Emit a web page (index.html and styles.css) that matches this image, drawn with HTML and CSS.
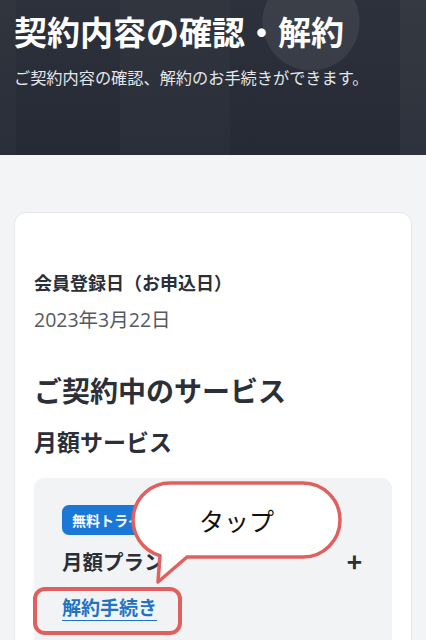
FILE: index.html
```html
<!DOCTYPE html>
<html lang="ja">

<head>
    <meta charset="UTF-8">
    <meta name="viewport" content="width=device-width, initial-scale=1.0">
    <title>契約内容の確認・解約</title>
    <link rel="stylesheet" href="styles.css">
</head>

<body>
    <header class="hero">
        <h1 class="hero-title">契約内容の確認・解約</h1>
        <p class="hero-lead">ご契約内容の確認、解約のお手続きができます。</p>
    </header>

    <main class="content">
        <section class="card">
            <div class="label">会員登録日（お申込日）</div>
            <div class="value">2023年3月22日</div>

            <h2 class="section-title">ご契約中のサービス</h2>
            <h3 class="sub-title">月額サービス</h3>

            <div class="plan">
                <span class="badge">無料トライアル中</span>
                <div class="plan-row">
                    <span class="plan-name">月額プラン</span>
                    <span class="plan-toggle">+</span>
                </div>
                <a class="cancel-link" href="#">解約手続き</a>

                <!-- annotation overlays -->
                <span class="mark"></span>
                <div class="callout">
                    <svg width="215" height="105" viewBox="0 0 215 105">
                        <path d="M40,3 H173 A37,37 0 0 1 173,77 H57 L28,102 L30,75.6 A37,37 0 0 1 40,3 Z"
                            fill="#fff" stroke="#e0605f" stroke-width="3.5" stroke-linejoin="round" />
                    </svg>
                    <span class="callout-text">タップ</span>
                </div>
            </div>
        </section>
    </main>
</body>

</html>
```

FILE: styles.css
```css
body {
    margin: 0;
    background-color: #f3f4f6;
    font-family: "Noto Sans CJK JP", "Noto Sans", sans-serif;
    color: #2b2f37;
}

.hero {
    height: 155px;
    box-sizing: border-box;
    padding: 10px 14px 0;
    background:
        radial-gradient(circle at 311px 22px, rgba(255, 255, 255, 0.07) 48px, transparent 49px),
        linear-gradient(90deg, rgba(255, 255, 255, 0.02) 0 16px, transparent 16px 120px, rgba(255, 255, 255, 0.02) 120px 230px, transparent 230px 400px, rgba(255, 255, 255, 0.04) 400px),
        linear-gradient(180deg, #2c313b 0%, #252a34 100%);
    color: #fff;
}

.hero-title {
    margin: 0;
    font-size: 33px;
    line-height: 42px;
    font-weight: 700;
}

.hero-lead {
    margin: 13px 0 0;
    font-size: 16.2px;
    line-height: 24px;
    color: #e4e6ea;
}

.content {
    padding: 57px 14px 0;
}

.card {
    background-color: #fff;
    border: 1px solid #e6e8eb;
    border-radius: 12px;
    padding: 57px 19px 40px;
}

.label {
    font-size: 18px;
    line-height: 24px;
    font-weight: 700;
}

.value {
    margin-top: 14px;
    font-family: "Open Sans", "Noto Sans CJK JP", sans-serif;
    font-size: 19.5px;
    line-height: 24px;
    color: #555a61;
}

.section-title {
    margin: 40px 0 0;
    font-size: 28px;
    line-height: 36px;
    font-weight: 700;
}

.sub-title {
    margin: 18px 0 0;
    font-size: 23px;
    line-height: 30px;
    font-weight: 700;
}

.plan {
    position: relative;
    margin-top: 22px;
    background-color: #f2f3f5;
    border-radius: 10px;
    padding: 27px 28px 30px;
}

.badge {
    display: inline-block;
    height: 30px;
    line-height: 30px;
    padding: 0 10px;
    border-radius: 7px;
    background-color: #1a78d6;
    color: #fff;
    font-size: 14px;
    font-weight: 700;
}

.plan-row {
    display: flex;
    justify-content: space-between;
    align-items: center;
    margin-top: 12px;
}

.plan-name {
    font-size: 20.5px;
    line-height: 28px;
    font-weight: 700;
}

.plan-toggle {
    font-size: 26px;
    line-height: 28px;
    font-weight: 700;
    margin-right: 2px;
}

.cancel-link {
    display: inline-block;
    margin-top: 19px;
    font-size: 19px;
    line-height: 26px;
    font-weight: 700;
    color: #1f73c4;
    text-decoration: underline;
    text-underline-offset: 5px;
    text-decoration-thickness: 1px;
}

.mark {
    position: absolute;
    left: -1px;
    top: 109px;
    width: 149px;
    height: 48px;
    box-sizing: border-box;
    border: 4px solid #e0605f;
    border-radius: 12px;
}

.callout {
    position: absolute;
    left: 96px;
    top: 2px;
    width: 215px;
    height: 105px;
}

.callout svg {
    display: block;
}

.callout-text {
    position: absolute;
    left: 3px;
    top: 3px;
    width: 207px;
    height: 74px;
    display: flex;
    align-items: center;
    justify-content: center;
    font-size: 25px;
    color: #111;
}
```
